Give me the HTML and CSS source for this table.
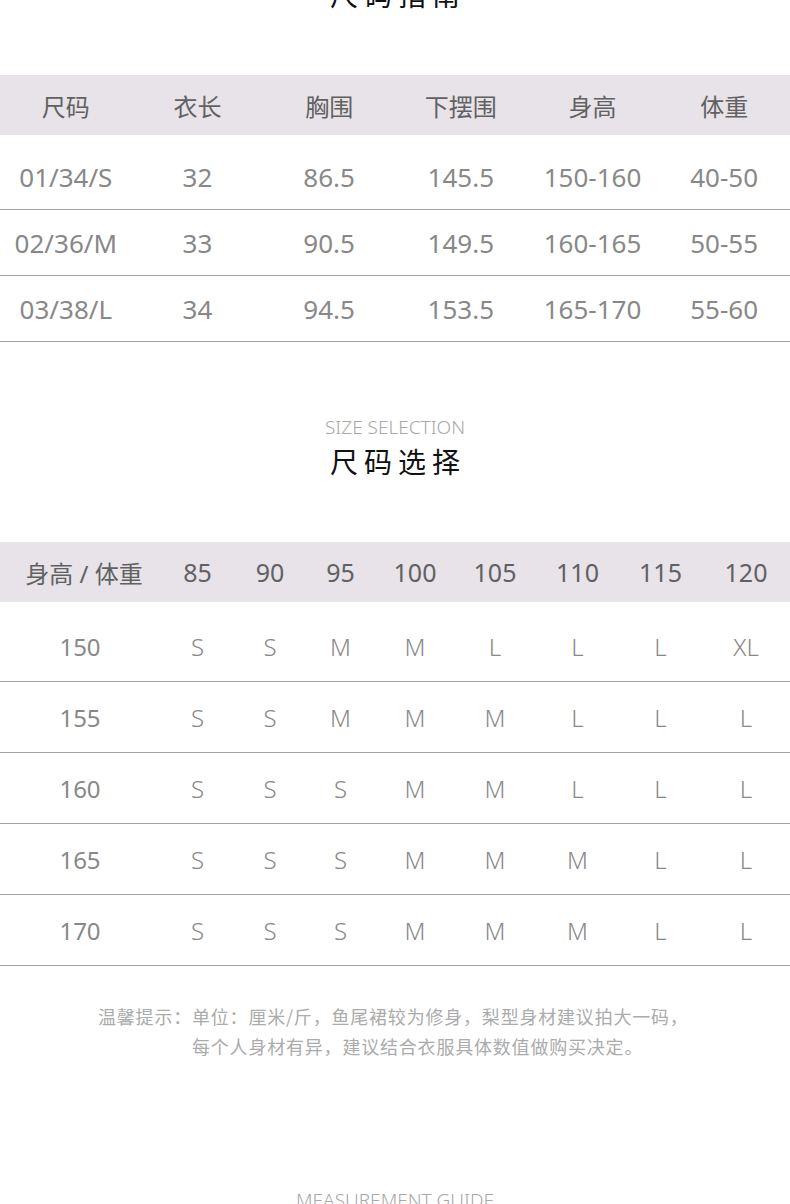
FILE: index.html
```html
<!DOCTYPE html>
<html lang="zh-CN">
<head>
<meta charset="utf-8">
<title>尺码指南</title>
<link rel="stylesheet" href="styles.css">
</head>
<body>
<div class="page">
  <section class="section guide">
    <div class="heading">
      <div class="en">SIZE GUIDE</div>
      <div class="cn">尺码指南</div>
    </div>
    <div class="table t1">
      <div class="head">
        <span>尺码</span><span>衣长</span><span>胸围</span><span>下摆围</span><span>身高</span><span>体重</span>
      </div>
      <div class="body">
        <div class="row"><span>01/34/S</span><span>32</span><span>86.5</span><span>145.5</span><span>150-160</span><span>40-50</span></div>
        <div class="row"><span>02/36/M</span><span>33</span><span>90.5</span><span>149.5</span><span>160-165</span><span>50-55</span></div>
        <div class="row"><span>03/38/L</span><span>34</span><span>94.5</span><span>153.5</span><span>165-170</span><span>55-60</span></div>
      </div>
    </div>
  </section>

  <section class="section selection">
    <div class="heading">
      <div class="en">SIZE SELECTION</div>
      <div class="cn">尺码选择</div>
    </div>
    <div class="table t2">
      <div class="head">
        <span class="first">身高 / 体重</span><span>85</span><span>90</span><span>95</span><span>100</span><span>105</span><span>110</span><span>115</span><span>120</span>
      </div>
      <div class="body">
        <div class="row"><span class="first">150</span><span>S</span><span>S</span><span>M</span><span>M</span><span>L</span><span>L</span><span>L</span><span>XL</span></div>
        <div class="row"><span class="first">155</span><span>S</span><span>S</span><span>M</span><span>M</span><span>M</span><span>L</span><span>L</span><span>L</span></div>
        <div class="row"><span class="first">160</span><span>S</span><span>S</span><span>S</span><span>M</span><span>M</span><span>L</span><span>L</span><span>L</span></div>
        <div class="row"><span class="first">165</span><span>S</span><span>S</span><span>S</span><span>M</span><span>M</span><span>M</span><span>L</span><span>L</span></div>
        <div class="row"><span class="first">170</span><span>S</span><span>S</span><span>S</span><span>M</span><span>M</span><span>M</span><span>L</span><span>L</span></div>
      </div>
    </div>
    <div class="note">
      <span class="label">温馨提示：</span>
      <div class="lines">
        <div>单位：厘米/斤，鱼尾裙较为修身，梨型身材建议拍大一码，</div>
        <div>每个人身材有异，建议结合衣服具体数值做购买决定。</div>
      </div>
    </div>
  </section>

  <section class="section measure">
    <div class="heading">
      <div class="en">MEASUREMENT GUIDE</div>
      <div class="cn">测量指南</div>
    </div>
  </section>
</div>
</body>
</html>
```

FILE: styles.css
```css
html, body {
  margin: 0;
  padding: 0;
  background: #ffffff;
}

body {
  width: 790px;
  height: 1204px;
  overflow: hidden;
  font-family: "Noto Sans", "Noto Sans CJK SC", sans-serif;
}

.page {
  margin-top: -50px;
}

.heading {
  display: flex;
  flex-direction: column;
  align-items: center;
}

.heading .en {
  height: 20px;
  line-height: 20px;
  font-size: 19px;
  font-weight: 300;
  color: #a8a8a8;
  font-family: "Noto Sans", sans-serif;
}

.heading .cn {
  margin-top: 7px;
  height: 34px;
  line-height: 34px;
  font-size: 28px;
  color: #111111;
  letter-spacing: 6px;
  padding-left: 6px;
  font-family: "Noto Sans CJK SC", sans-serif;
}

.table {
  margin-top: 64px;
}

.head {
  height: 60px;
  background: #e7e3e9;
  display: grid;
  align-items: center;
  color: #616161;
  font-size: 24px;
  font-family: "Noto Sans", "Noto Sans CJK SC", sans-serif;
}

.head span, .row span {
  text-align: center;
  white-space: nowrap;
}

.body {
  padding-top: 9px;
}

.row {
  display: grid;
  align-items: center;
  border-bottom: 1px solid #a3a3a3;
  color: #888888;
  font-size: 26px;
  font-family: "Noto Sans", sans-serif;
}

.t1 .head, .t1 .row {
  grid-template-columns: repeat(6, 1fr);
}

.t1 .row {
  height: 65px;
}

.t2 .head, .t2 .row {
  grid-template-columns: 160px 75px 70px 71px 78px 82px 83px 83px 88px;
}

.t2 .head .first {
  padding-left: 8px;
}

.t2 .head span:not(.first) {
  font-size: 25px;
}

.t2 .row {
  height: 70px;
  font-size: 24px;
}

.t2 .row span:not(.first) {
  font-size: 24px;
  font-weight: 300;
}

.section.selection {
  margin-top: 75px;
}

.note {
  margin-top: 35px;
  display: flex;
  padding-left: 98px;
  font-size: 18px;
  line-height: 30px;
  color: #ababab;
  font-family: "Noto Sans CJK SC", sans-serif;
  letter-spacing: 0.8px;
}

.note .label {
  white-space: nowrap;
}

.section.measure {
  margin-top: 129px;
}
```
